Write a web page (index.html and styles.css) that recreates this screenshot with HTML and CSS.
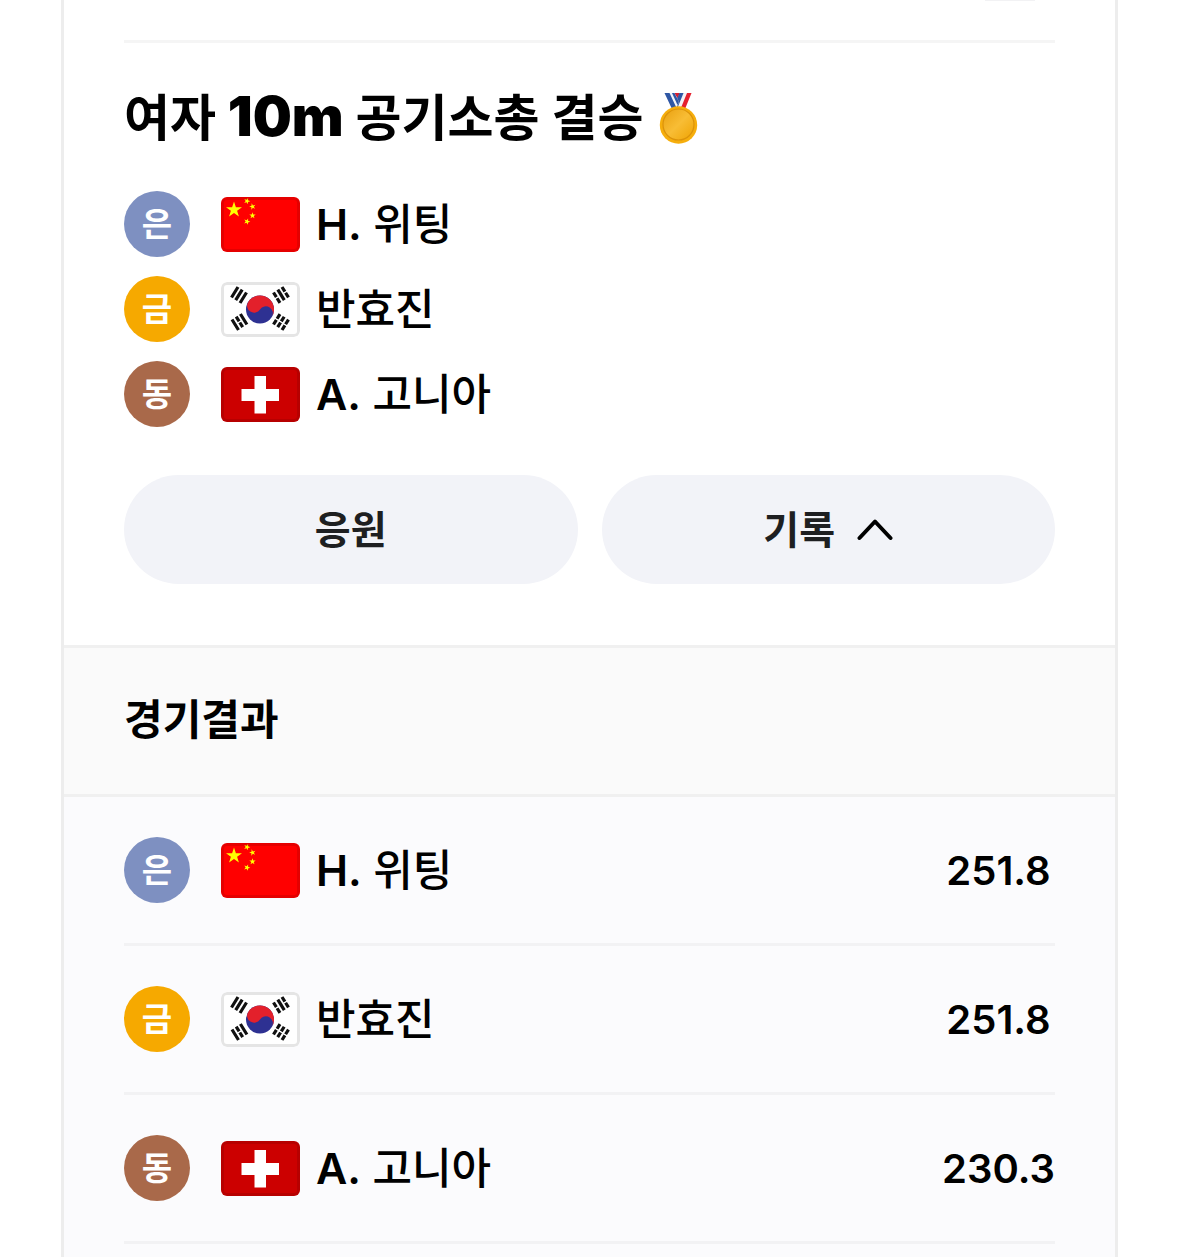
FILE: index.html
```html
<!DOCTYPE html>
<html lang="ko">
<head>
    <meta charset="UTF-8">
    <meta name="viewport" content="width=device-width, initial-scale=1.0">
    <title>여자 10m 공기소총 결승</title>
    <link rel="stylesheet" href="styles.css">
</head>
<body>

<!-- Flags shared by both lists -->
<svg class="sprite" aria-hidden="true">
    <symbol id="flag-cn" viewBox="0 0 79 55">
        <rect width="79" height="55" fill="#ff0000"/>
        <g fill="#ffff00">
            <path id="star" d="M13 4.5L14.9 10.2H21L16.1 13.8L17.9 19.6L13 16.1L8.1 19.6L9.9 13.8L5 10.2H11.1Z"/>
            <use href="#star" transform="translate(26 4) rotate(20) scale(.4) translate(-13 -12.6)"/>
            <use href="#star" transform="translate(31.5 9.5) rotate(-15) scale(.4) translate(-13 -12.6)"/>
            <use href="#star" transform="translate(31.5 18.5) scale(.4) translate(-13 -12.6)"/>
            <use href="#star" transform="translate(26 24.5) rotate(20) scale(.4) translate(-13 -12.6)"/>
        </g>
        <rect class="flag-edge" x="1.5" y="1.5" width="76" height="52" rx="4.5"/>
    </symbol>
    <symbol id="flag-kr" viewBox="0 0 79 55">
        <rect width="79" height="55" fill="#fff"/>
        <circle cx="39" cy="27.5" r="14" fill="#2e3192"/>
        <path d="M25 27.5A14 14 0 0 1 53 27.5A7 7 0 0 0 39 27.5A7 7 0 0 1 25 27.5Z" fill="#e3202b" transform="rotate(33 39 27.5)"/>
        <g stroke="#111" stroke-width="3.2">
            <path d="M10.5 15.5L17 5M14.7 18.2L21.2 7.7M19 21L25.5 10.5"/>
            <path d="M11 37.5L17.5 48M19.4 32L25.9 42.5"/>
            <path d="M15.2 34.7L21.7 45.2" stroke-dasharray="5.5 1.3"/>
            <path d="M61 5L67.5 15.5M52.5 10.5L59 21" stroke-dasharray="5.5 1.3"/>
            <path d="M56.8 7.7L63.3 18.2"/>
            <path d="M52.5 42.5L59 32M56.7 45.2L63.2 34.7M61 48L67.5 37.5" stroke-dasharray="5.5 1.3"/>
        </g>
        <rect class="flag-edge" x="1.5" y="1.5" width="76" height="52" rx="4.5"/>
    </symbol>
    <symbol id="flag-ch" viewBox="0 0 79 55">
        <rect width="79" height="55" fill="#cc0000"/>
        <path d="M33.5 9H45V22H58V34H45V46.5H33.5V34H20.5V22H33.5Z" fill="#fff"/>
        <rect class="flag-edge" x="1.5" y="1.5" width="76" height="52" rx="4.5"/>
    </symbol>
</svg>

<main class="card">
    <div class="previous">
        <span class="previous-chip"></span>
    </div>

    <section class="match">
        <div class="title">
            <h1>여자 <b>10m</b> 공기소총 결승</h1>
            <svg class="medal" viewBox="0 0 39 53" role="img" aria-label="메달">
                <defs>
                    <linearGradient id="gold" x1="0" y1="0" x2="1" y2="1">
                        <stop offset="0" stop-color="#e9a010"/>
                        <stop offset=".5" stop-color="#f8bd35"/>
                        <stop offset="1" stop-color="#efa302"/>
                    </linearGradient>
                </defs>
                <path d="M15 1H22L19 7Z" fill="#d71f30"/>
                <path d="M21 1H32.5L25 17H13Z" fill="#f5f2f5"/>
                <path d="M28 1H32.5L26 17H21.5Z" fill="#e5202e"/>
                <path d="M20.5 1H24.5L18 17H13.5Z" fill="#2f57a4"/>
                <path d="M5.5 1H15.5L20 10L17 17H13Z" fill="#f1f4fa"/>
                <path d="M5.5 1H10.5L18 17H13Z" fill="#2f57a4"/>
                <path d="M13 1H15.5L20 10L18.5 13Z" fill="#2f57a4"/>
                <circle cx="19.5" cy="33" r="18.7" fill="#f6ae0c"/>
                <circle cx="19.5" cy="32.5" r="15.5" fill="url(#gold)" stroke="#db920a" stroke-width="1.2"/>
            </svg>
        </div>

        <ul class="players">
            <li class="player">
                <span class="rank silver">은</span>
                <svg class="flag"><use href="#flag-cn"/></svg>
                <span class="name"><b>H.</b> 위팅</span>
            </li>
            <li class="player">
                <span class="rank gold">금</span>
                <svg class="flag"><use href="#flag-kr"/></svg>
                <span class="name">반효진</span>
            </li>
            <li class="player">
                <span class="rank bronze">동</span>
                <svg class="flag"><use href="#flag-ch"/></svg>
                <span class="name"><b>A.</b> 고니아</span>
            </li>
        </ul>

        <div class="actions">
            <button type="button" class="action">응원</button>
            <button type="button" class="action" aria-expanded="true">
                기록
                <svg class="chevron" viewBox="0 0 36 24" aria-hidden="true">
                    <path d="M2.5 20L18 3.5L33.5 20"/>
                </svg>
            </button>
        </div>
    </section>

    <h2 class="result-title">경기결과</h2>

    <div class="result">
        <table class="result-table">
            <tr>
                <td>
                    <div class="player">
                        <span class="rank silver">은</span>
                        <svg class="flag"><use href="#flag-cn"/></svg>
                        <span class="name"><b>H.</b> 위팅</span>
                    </div>
                </td>
                <td class="score">251.8</td>
            </tr>
            <tr>
                <td>
                    <div class="player">
                        <span class="rank gold">금</span>
                        <svg class="flag"><use href="#flag-kr"/></svg>
                        <span class="name">반효진</span>
                    </div>
                </td>
                <td class="score">251.8</td>
            </tr>
            <tr>
                <td>
                    <div class="player">
                        <span class="rank bronze">동</span>
                        <svg class="flag"><use href="#flag-ch"/></svg>
                        <span class="name"><b>A.</b> 고니아</span>
                    </div>
                </td>
                <td class="score">230.3</td>
            </tr>
        </table>
    </div>
</main>

</body>
</html>
```
FILE: styles.css
```css
* {
    margin: 0;
    padding: 0;
    box-sizing: border-box;
}

body {
    font-family: Inter, 'Noto Sans CJK KR', sans-serif;
    font-weight: 500;
    background-color: #fff;
    color: #000;
}

.sprite {
    position: absolute;
    width: 0;
    height: 0;
}

.card {
    display: flex;
    flex-direction: column;
    min-height: 100vh;
    margin: 0 61px;
    border: solid #ededed;
    border-width: 0 3px;
}

/* Tail of the match above */
.previous {
    display: flex;
    justify-content: flex-end;
    margin: 0 60px;
    padding: 0 20px 39px;
    border-bottom: 3px solid #f5f5f5;
}

.previous-chip {
    width: 50px;
    height: 1px;
    background-color: #f2f2f4;
}

.match {
    padding: 40px 60px 61px;
}

.title {
    display: flex;
    align-items: center;
    gap: 16px;
}

.title h1 {
    font-size: 50px;
    font-weight: 700;
    line-height: 70px;
}

.title b {
    font-size: 55px;
    font-weight: 900;
    line-height: 60px;
}

.medal {
    width: 39px;
    height: 53px;
}

.players {
    display: grid;
    gap: 19px;
    margin-top: 38px;
    list-style: none;
}

.player {
    display: flex;
    align-items: center;
}

.rank {
    width: 66px;
    height: 66px;
    margin-right: 31px;
    border-radius: 50%;
    color: #fff;
    font-size: 33px;
    font-weight: 700;
    line-height: 66px;
    text-align: center;
}

.silver {
    background-color: #7e90c1;
}

.gold {
    background-color: #f6a900;
}

.bronze {
    background-color: #a9694a;
}

.flag {
    width: 79px;
    height: 55px;
    margin-right: 16px;
    border-radius: 6px;
}

.flag-edge {
    fill: none;
    stroke: #000;
    stroke-opacity: 0.1;
    stroke-width: 3;
}

.name {
    font-size: 43px;
    line-height: 60px;
}

.name b {
    font-weight: 600;
}

.actions {
    display: grid;
    grid-template-columns: 1fr 1fr;
    gap: 24px;
    margin-top: 48px;
}

.action {
    display: flex;
    justify-content: center;
    align-items: center;
    gap: 22px;
    height: 109px;
    border: none;
    border-radius: 55px;
    background-color: #f2f3f8;
    color: #1e1f21;
    font-family: inherit;
    font-size: 39px;
    font-weight: 700;
    line-height: 60px;
    cursor: pointer;
}

.chevron {
    width: 36px;
    height: 24px;
    fill: none;
    stroke: #000;
    stroke-width: 4;
    stroke-linecap: round;
    stroke-linejoin: round;
}

.result-title {
    padding: 41px 60px 43px;
    border: solid #f0f0f0;
    border-width: 3px 0;
    background-color: #fafafa;
    font-size: 42px;
    font-weight: 700;
    line-height: 62px;
}

.result {
    flex: 1;
    padding: 0 60px 10px;
    background-color: #fbfbfd;
}

.result-table {
    width: 100%;
    border-spacing: 0;
}

.result-table td {
    padding: 40px 0;
    border-bottom: 3px solid #f2f2f4;
}

.result-table .score {
    width: 113px;
    font-size: 40px;
    font-weight: 600;
    text-align: center;
}
```
